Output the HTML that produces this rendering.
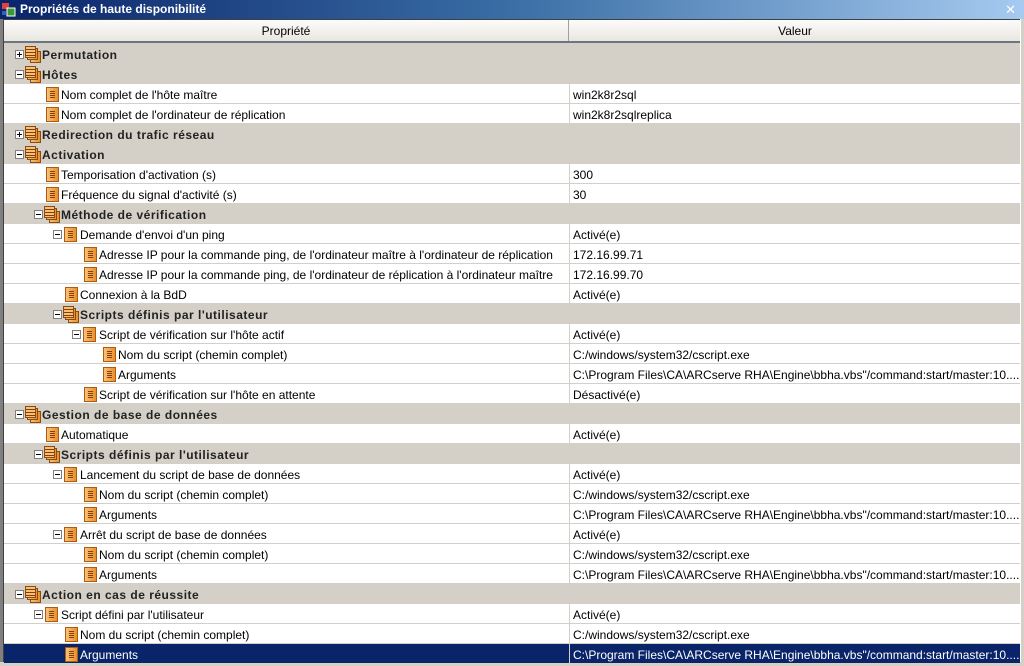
<!DOCTYPE html>
<html><head><meta charset="utf-8"><style>
*{margin:0;padding:0;box-sizing:border-box}
body{width:1024px;height:662px;overflow:hidden;background:#d4d0c8;font-family:"Liberation Sans",sans-serif;font-size:12px;color:#000;position:relative}
.title{position:absolute;left:0;top:0;width:1024px;height:19px;background:linear-gradient(90deg,#0a246a 0%,#3a6ea5 50%,#a6caf0 100%);color:#fff;font-weight:bold;font-size:12px;line-height:19px;padding-left:20px}
.title .x{position:absolute;right:8px;top:0;font-weight:normal;font-size:13px}
.ticon{position:absolute;left:2px;top:3px;width:14px;height:14px}
.hdr{position:absolute;top:19px;left:4px;width:1016px;height:24px;background:linear-gradient(#fcfcfb,#e8e6e0);border-bottom:2px solid #6b7780;border-top:1px solid #404040}
.hdr div{position:absolute;top:0;height:21px;line-height:23px;text-align:center;color:#000}
.lb{position:absolute;left:0;top:19px;width:4px;height:643px;background:#808080;border-right:1px solid #404040}
.rb{position:absolute;right:0;top:19px;width:4px;height:643px;background:#d4d0c8;border-left:1px solid #fff}
.r{position:absolute;left:4px;width:1016px;height:20px;background:#fff;border-bottom:1px solid #d4d0c8}
.r.g{background:#d4d0c8;border-bottom:1px solid #d4d0c8}
.r .t{position:absolute;top:1px;line-height:20px;white-space:nowrap}
.r.g .t{font-weight:bold;letter-spacing:.5px;color:#222}
.r .v{position:absolute;left:565px;top:0;line-height:22px;white-space:nowrap;border-left:1px solid #d4d0c8;padding-left:3px;height:19px}
.r.g .v{display:none}
.r.s{background:#0a246a}.r.s .t,.r.s .v{color:#fff}
.e{position:absolute;top:6px;width:9px;height:9px;border:1px solid #808080;background:#fff}
.e:before{content:"";position:absolute;left:1px;top:3px;width:5px;height:1px;background:#000}
.e.p:after{content:"";position:absolute;left:3px;top:1px;width:1px;height:5px;background:#000}
.i{position:absolute;top:3px;width:13px;height:15px;background:linear-gradient(90deg,#f6c27a,#e8902e);border:1px solid #b05a10}
.i:before{content:"";position:absolute;left:3px;top:3px;width:5px;height:7px;background:repeating-linear-gradient(#8a3d00 0 1px,transparent 1px 2px)}
.gi{position:absolute;top:2px;width:16px;height:17px}
.gi b{position:absolute;width:11px;height:12px;background:linear-gradient(90deg,#f6c27a,#e8902e);border:1px solid #8a4a10}
.gi b:nth-child(1){left:5px;top:5px}.gi b:nth-child(2){left:2px;top:2px}.gi b:nth-child(3){left:0;top:0;background:repeating-linear-gradient(#f6c27a 0 2px,#8a3d00 2px 3px)}
</style></head><body>
<div class="title"><svg class="ticon" viewBox="0 0 14 14"><rect x="0" y="0" width="7" height="6" fill="#e04040"/><rect x="5" y="5" width="8" height="8" fill="#3a9a3a" stroke="#fff" stroke-width="1"/><rect x="0" y="8" width="4" height="4" fill="#3060c0"/></svg>Propriétés de haute disponibilité<span class="x">✕</span></div>
<div class="lb"></div><div class="rb"></div>
<div class="hdr"><div style="left:0;width:565px;border-right:1px solid #a0a0a0">Propriété</div><div style="left:566px;width:450px">Valeur</div></div>

<div class="r g" style="top:44px"><span class="e p" style="left:11px"></span><span class="gi" style="left:21px"><b></b><b></b><b></b></span><span class="t" style="left:38px">Permutation</span></div>
<div class="r g" style="top:64px"><span class="e" style="left:11px"></span><span class="gi" style="left:21px"><b></b><b></b><b></b></span><span class="t" style="left:38px">Hôtes</span></div>
<div class="r" style="top:84px"><span class="i" style="left:42px"></span><span class="t" style="left:57px">Nom complet de l'hôte maître</span><span class="v">win2k8r2sql</span></div>
<div class="r" style="top:104px"><span class="i" style="left:42px"></span><span class="t" style="left:57px">Nom complet de l'ordinateur de réplication</span><span class="v">win2k8r2sqlreplica</span></div>
<div class="r g" style="top:124px"><span class="e p" style="left:11px"></span><span class="gi" style="left:21px"><b></b><b></b><b></b></span><span class="t" style="left:38px">Redirection du trafic réseau</span></div>
<div class="r g" style="top:144px"><span class="e" style="left:11px"></span><span class="gi" style="left:21px"><b></b><b></b><b></b></span><span class="t" style="left:38px">Activation</span></div>
<div class="r" style="top:164px"><span class="i" style="left:42px"></span><span class="t" style="left:57px">Temporisation d'activation (s)</span><span class="v">300</span></div>
<div class="r" style="top:184px"><span class="i" style="left:42px"></span><span class="t" style="left:57px">Fréquence du signal d'activité (s)</span><span class="v">30</span></div>
<div class="r g" style="top:204px"><span class="e" style="left:30px"></span><span class="gi" style="left:40px"><b></b><b></b><b></b></span><span class="t" style="left:57px">Méthode de vérification</span></div>
<div class="r" style="top:224px"><span class="e" style="left:49px"></span><span class="i" style="left:60px"></span><span class="t" style="left:76px">Demande d'envoi d'un ping</span><span class="v">Activé(e)</span></div>
<div class="r" style="top:244px"><span class="i" style="left:80px"></span><span class="t" style="left:95px">Adresse IP pour la commande ping, de l'ordinateur maître à l'ordinateur de réplication</span><span class="v">172.16.99.71</span></div>
<div class="r" style="top:264px"><span class="i" style="left:80px"></span><span class="t" style="left:95px">Adresse IP pour la commande ping, de l'ordinateur de réplication à l'ordinateur maître</span><span class="v">172.16.99.70</span></div>
<div class="r" style="top:284px"><span class="i" style="left:61px"></span><span class="t" style="left:76px">Connexion à la BdD</span><span class="v">Activé(e)</span></div>
<div class="r g" style="top:304px"><span class="e" style="left:49px"></span><span class="gi" style="left:59px"><b></b><b></b><b></b></span><span class="t" style="left:76px">Scripts définis par l'utilisateur</span></div>
<div class="r" style="top:324px"><span class="e" style="left:68px"></span><span class="i" style="left:79px"></span><span class="t" style="left:95px">Script de vérification sur l'hôte actif</span><span class="v">Activé(e)</span></div>
<div class="r" style="top:344px"><span class="i" style="left:99px"></span><span class="t" style="left:114px">Nom du script (chemin complet)</span><span class="v">C:/windows/system32/cscript.exe</span></div>
<div class="r" style="top:364px"><span class="i" style="left:99px"></span><span class="t" style="left:114px">Arguments</span><span class="v">C:\Program Files\CA\ARCserve RHA\Engine\bbha.vbs"/command:start/master:10....</span></div>
<div class="r" style="top:384px"><span class="i" style="left:80px"></span><span class="t" style="left:95px">Script de vérification sur l'hôte en attente</span><span class="v">Désactivé(e)</span></div>
<div class="r g" style="top:404px"><span class="e" style="left:11px"></span><span class="gi" style="left:21px"><b></b><b></b><b></b></span><span class="t" style="left:38px">Gestion de base de données</span></div>
<div class="r" style="top:424px"><span class="i" style="left:42px"></span><span class="t" style="left:57px">Automatique</span><span class="v">Activé(e)</span></div>
<div class="r g" style="top:444px"><span class="e" style="left:30px"></span><span class="gi" style="left:40px"><b></b><b></b><b></b></span><span class="t" style="left:57px">Scripts définis par l'utilisateur</span></div>
<div class="r" style="top:464px"><span class="e" style="left:49px"></span><span class="i" style="left:60px"></span><span class="t" style="left:76px">Lancement du script de base de données</span><span class="v">Activé(e)</span></div>
<div class="r" style="top:484px"><span class="i" style="left:80px"></span><span class="t" style="left:95px">Nom du script (chemin complet)</span><span class="v">C:/windows/system32/cscript.exe</span></div>
<div class="r" style="top:504px"><span class="i" style="left:80px"></span><span class="t" style="left:95px">Arguments</span><span class="v">C:\Program Files\CA\ARCserve RHA\Engine\bbha.vbs"/command:start/master:10....</span></div>
<div class="r" style="top:524px"><span class="e" style="left:49px"></span><span class="i" style="left:60px"></span><span class="t" style="left:76px">Arrêt du script de base de données</span><span class="v">Activé(e)</span></div>
<div class="r" style="top:544px"><span class="i" style="left:80px"></span><span class="t" style="left:95px">Nom du script (chemin complet)</span><span class="v">C:/windows/system32/cscript.exe</span></div>
<div class="r" style="top:564px"><span class="i" style="left:80px"></span><span class="t" style="left:95px">Arguments</span><span class="v">C:\Program Files\CA\ARCserve RHA\Engine\bbha.vbs"/command:start/master:10....</span></div>
<div class="r g" style="top:584px"><span class="e" style="left:11px"></span><span class="gi" style="left:21px"><b></b><b></b><b></b></span><span class="t" style="left:38px">Action en cas de réussite</span></div>
<div class="r" style="top:604px"><span class="e" style="left:30px"></span><span class="i" style="left:41px"></span><span class="t" style="left:57px">Script défini par l'utilisateur</span><span class="v">Activé(e)</span></div>
<div class="r" style="top:624px"><span class="i" style="left:61px"></span><span class="t" style="left:76px">Nom du script (chemin complet)</span><span class="v">C:/windows/system32/cscript.exe</span></div>
<div class="r s" style="top:644px"><span class="i" style="left:61px"></span><span class="t" style="left:76px">Arguments</span><span class="v">C:\Program Files\CA\ARCserve RHA\Engine\bbha.vbs"/command:start/master:10....</span></div>
</body></html>
